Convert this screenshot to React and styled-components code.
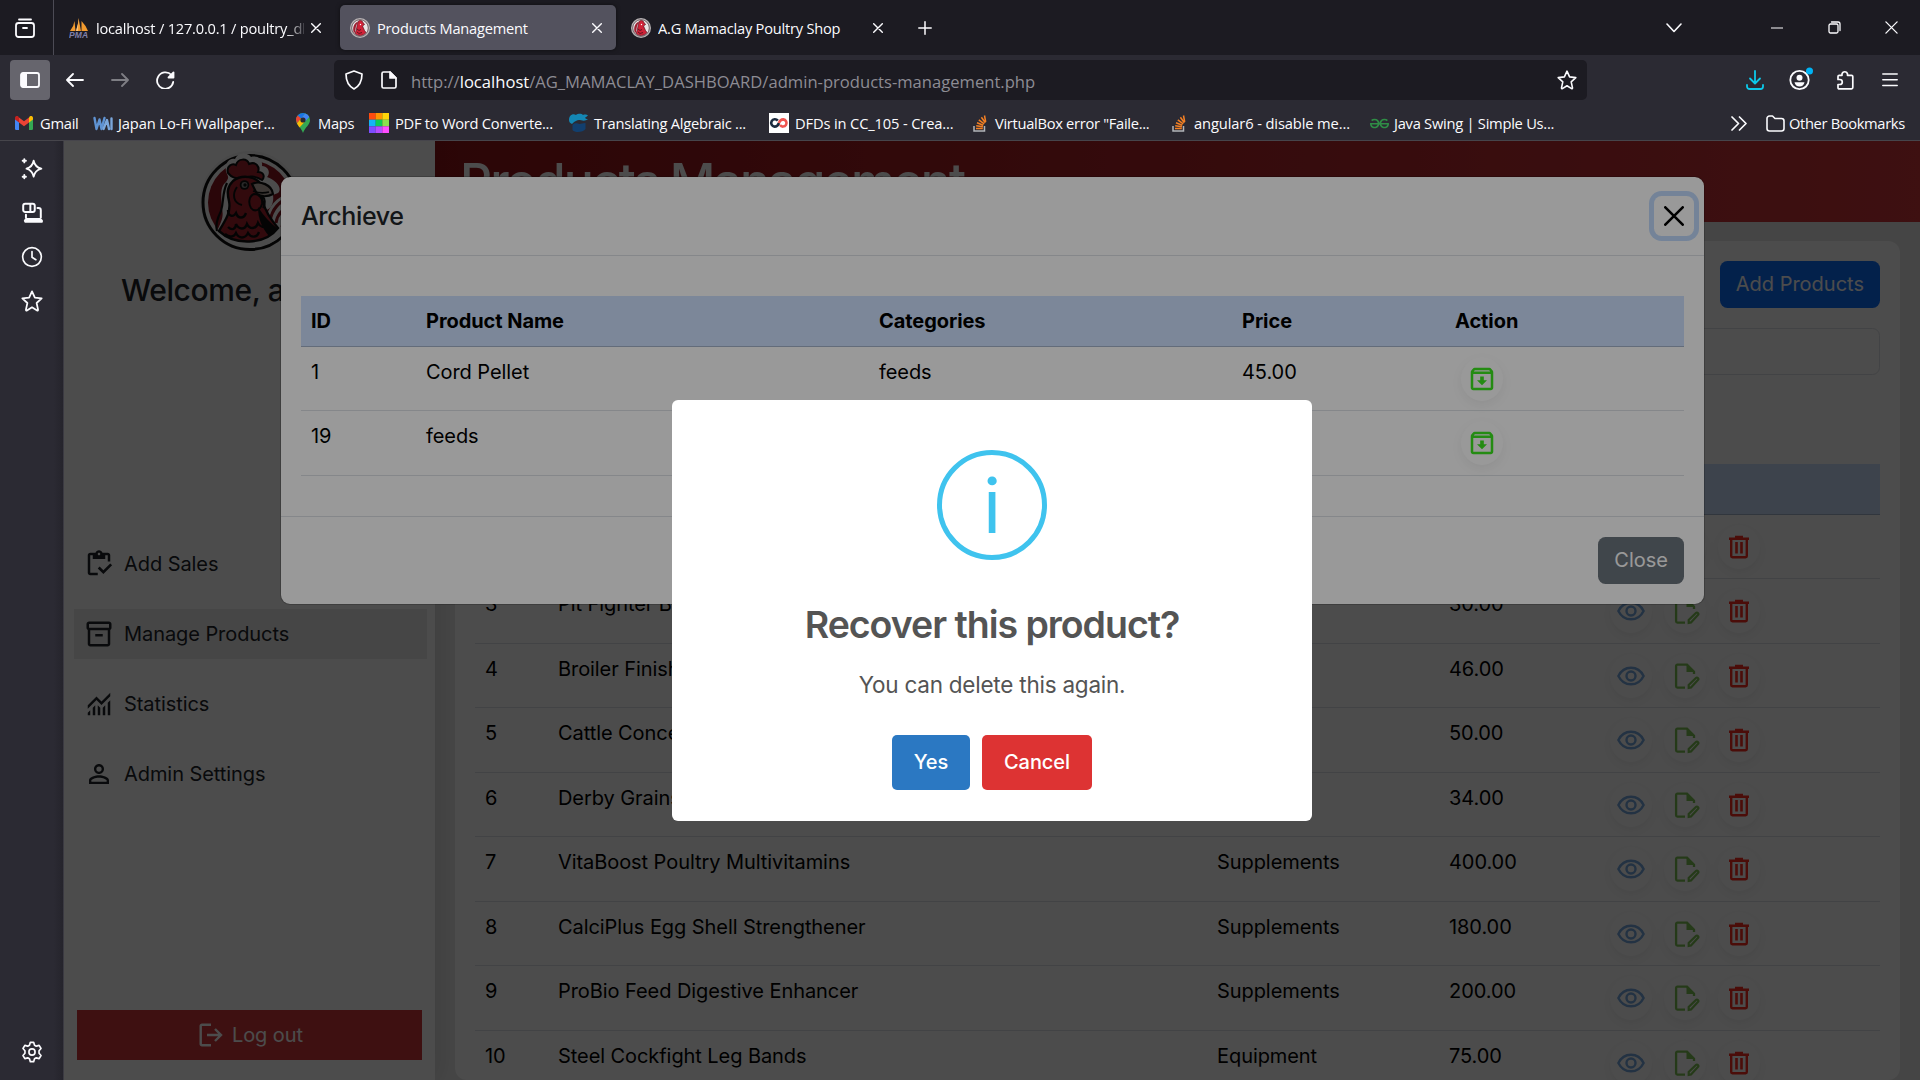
import React from "react";
import styled, { createGlobalStyle, css } from "styled-components";
import { MdOutlineInventory, MdOutlineInventory2, MdPersonOutline, MdOutlineArchive } from "react-icons/md";
import { SiGeeksforgeeks } from "react-icons/si";

const Global = createGlobalStyle`
  *, *::before, *::after { box-sizing: border-box; }
  body { margin: 0; background: #2b2a33; overflow: hidden; }
  svg { display: block; flex: none; }
`;

const ui = '"Open Sans", "Noto Sans", sans-serif';
const inter = 'Inter, "Liberation Sans", sans-serif';

/* ---------- browser window ---------- */

const Window = styled.div`
  width: 1920px;
  height: 1080px;
  display: flex;
  flex-direction: column;
  overflow: hidden;
  background: #2b2a33;
  color: #fbfbfe;
  font-family: ${ui};
`;

const TabStrip = styled.div`
  height: 55px;
  flex: none;
  display: flex;
  align-items: center;
  background: #1c1b22;
`;

const TabsButton = styled.div`
  width: 54px;
  height: 55px;
  padding-left: 15px;
  display: flex;
  align-items: center;
  border-right: 1px solid #4c4b55;
`;

const Tab = styled.div`
  width: 276px;
  height: 45px;
  margin-left: ${(p) => p.$gap || 0}px;
  padding: 0 14.5px 0 10px;
  display: flex;
  align-items: center;
  gap: 7px;
  border-radius: 5px;
  font-size: 14.6px;
  letter-spacing: ${(p) => p.$track || -0.2}px;
  ${(p) =>
    p.$active &&
    css`
      background: #53525e;
      box-shadow: 0 0 4px rgba(0, 0, 0, 0.5);
    `}
`;

const TabLabel = styled.span`
  flex: 1;
  white-space: nowrap;
  overflow: hidden;
  ${(p) => p.$fade && "mask-image: linear-gradient(to right, #000 92%, rgba(0, 0, 0, 0.2) 100%);"}
`;

const Spacer = styled.div`
  flex: 1;
`;

const WindowButtons = styled.div`
  display: flex;
  align-items: center;
  justify-content: space-between;
  width: 238px;
  margin-right: 18px;
`;

const WinSlot = styled.div`
  width: 20px;
  display: flex;
  justify-content: center;
  margin-left: ${(p) => p.$before || 0}px;
  margin-right: ${(p) => p.$after || 0}px;
`;

const Toolbar = styled.div`
  height: 50px;
  flex: none;
  display: flex;
  align-items: center;
  padding: 0 8px 0 10px;
`;

const ToolButton = styled.div`
  width: ${(p) => p.$w || 45}px;
  height: 40px;
  display: flex;
  align-items: center;
  justify-content: center;
  border-radius: 4px;
  background: ${(p) => (p.$on ? "#66656d" : "transparent")};
  opacity: ${(p) => (p.$off ? 0.4 : 1)};
`;

const UrlBar = styled.div`
  width: 1253px;
  height: 40px;
  margin-left: 144px;
  padding: 0 10px;
  display: flex;
  align-items: center;
  gap: 17px;
  border-radius: 5px;
  background: #1c1b22;
`;

const Url = styled.span`
  flex: 1;
  margin-left: -3px;
  padding-top: 3px;
  font-size: 16.6px;
  letter-spacing: 0;
  color: #8d8c94;
  b {
    font-weight: 400;
    color: #fbfbfe;
  }
`;

const Bookmarks = styled.div`
  height: 36px;
  flex: none;
  display: flex;
  align-items: center;
  padding: 1px 0 0 15px;
  border-bottom: 1px solid #46454b;
`;

const Bookmark = styled.div`
  width: ${(p) => p.$w}px;
  display: flex;
  align-items: center;
  gap: ${(p) => p.$gap || 6}px;
  font-size: 14.7px;
  letter-spacing: ${(p) => p.$track || -0.26}px;
  white-space: nowrap;
`;

const Body = styled.div`
  flex: 1;
  min-height: 0;
  display: flex;
`;

const Rail = styled.div`
  width: 64px;
  flex: none;
  padding: 17px 0 17px 21px;
  display: flex;
  flex-direction: column;
  gap: 22px;
  background: linear-gradient(to right, #2b2a33 85%, #25242c);
  border-right: 1px solid #3b3a42;
`;

/* ---------- web page ---------- */

const Viewport = styled.div`
  position: relative;
  flex: 1;
  min-width: 0;
  overflow: hidden;
  font-family: ${inter};
  font-size: 20px;
  line-height: 30px;
  letter-spacing: -0.07px;
  color: #212529;
`;

const Page = styled.div`
  height: 100%;
  display: flex;
  isolation: isolate;
  background: #e9e9e9;
`;

const Sidebar = styled.div`
  width: 371px;
  flex: none;
  display: flex;
  flex-direction: column;
  align-items: center;
  padding: 10px 8px 20px 10px;
  background: #fff;
  box-shadow: 0 0 25px rgba(0, 0, 0, 0.12);
  z-index: 1;
`;

const Brand = styled.div`
  margin-right: 1px;
`;

const Welcome = styled.div`
  align-self: flex-start;
  margin: 21px 0 0 47px;
  font-size: 30px;
  line-height: 36px;
  font-weight: 500;
  letter-spacing: -0.4px;
  white-space: nowrap;
`;

const Nav = styled.div`
  width: 100%;
  margin-top: 231px;
  display: flex;
  flex-direction: column;
  gap: 20px;
`;

const NavItem = styled.div`
  height: 50px;
  padding-left: 10px;
  display: flex;
  align-items: center;
  gap: 10px;
  background: ${(p) => (p.$active ? "#ebebeb" : "transparent")};
`;

const Logout = styled.div`
  width: 345px;
  height: 50px;
  margin-top: auto;
  margin-right: 3px;
  padding-left: 4px;
  display: flex;
  align-items: center;
  justify-content: center;
  gap: 9px;
  background: #d0383b;
  color: #fff;
`;

const Main = styled.div`
  flex: 1;
  min-width: 0;
  display: flex;
  flex-direction: column;
`;

const Header = styled.div`
  height: 81px;
  flex: none;
  padding: 10px 0 0 25px;
  background: linear-gradient(to right, #921418, #d0363b);
  color: #fff;
  font-size: 50px;
  line-height: 60px;
  font-weight: 500;
  letter-spacing: -1.95px;
  white-space: nowrap;
`;

const Card = styled.div`
  flex: 1;
  min-height: 0;
  margin: 19px 20px 0;
  padding: 20px;
  display: flex;
  flex-direction: column;
  overflow: hidden;
  border-radius: 12px;
  background: #fff;
`;

const Button = styled.div`
  height: 47px;
  flex: none;
  padding: 0 16px 1px;
  display: flex;
  align-items: center;
  align-self: flex-end;
  border-radius: 7.5px;
  background: ${(p) => p.$bg};
  color: #fff;
  letter-spacing: 0;
`;

const Search = styled.div`
  height: 47px;
  flex: none;
  margin: 20px 0 89px;
  border: 1px solid #dee2e6;
  border-radius: 7.5px;
`;

const Row = styled.div`
  display: grid;
  grid-template-columns: ${(p) => p.$cols};
  height: ${(p) => (p.$head ? 51 : 64.45)}px;
  flex: none;
  padding: 10px 0 0;
  border-bottom: 1px solid ${(p) => (p.$head ? "#a6b5cc" : "#dee2e6")};
  background: ${(p) => (p.$head ? "#cfe2ff" : "transparent")};
  color: #000;
  font-weight: ${(p) => (p.$head ? 700 : 400)};
`;

const Cell = styled.div`
  padding-left: 10px;
  white-space: nowrap;
`;

const Actions = styled(Cell)`
  display: flex;
  gap: 12px;
  padding-left: ${(p) => p.$inset || 10}px;
`;

const Round = styled.div`
  width: 42px;
  height: 44px;
  display: flex;
  align-items: center;
  justify-content: center;
  border-radius: 50%;
  background: #fff;
  box-shadow: 0 4px 12px rgba(0, 0, 0, 0.06);
  color: ${(p) => p.$color};
`;

const Shade = styled.div`
  position: absolute;
  inset: 0;
  background: rgba(0, 0, 0, ${(p) => p.$a});
`;

/* ---------- archive modal ---------- */

const Modal = styled.div`
  position: absolute;
  left: 216px;
  top: 35px;
  width: 1425px;
  height: 429px;
  display: flex;
  flex-direction: column;
  border-radius: 10px;
  border: 1px solid rgba(0, 0, 0, 0.18);
  background: #fff;
  background-clip: padding-box;
`;

const ModalHead = styled.div`
  height: 79px;
  flex: none;
  padding: 0 10px 0 20px;
  display: flex;
  align-items: center;
  justify-content: space-between;
  border-bottom: 1px solid #dee2e6;
  font-size: 25px;
  font-weight: 500;
  letter-spacing: -0.35px;
`;

const CloseX = styled.div`
  width: 40px;
  height: 40px;
  display: flex;
  align-items: center;
  justify-content: center;
  border-radius: 7.5px;
  box-shadow: 0 0 0 5px rgba(13, 110, 253, 0.25);
`;

const ModalBody = styled.div`
  flex: 1;
  padding: 40px 20px 0;
`;

const ModalFoot = styled.div`
  height: 88px;
  padding: 20px 20px 0;
  display: flex;
  flex-direction: column;
  border-top: 1px solid #dee2e6;
`;

/* ---------- confirm dialog ---------- */

const Dialog = styled.div`
  position: absolute;
  left: 608px;
  top: 259px;
  width: 640px;
  height: 421px;
  display: flex;
  flex-direction: column;
  align-items: center;
  border-radius: 6px;
  background: #fff;
  color: #545454;
`;

const InfoCircle = styled.div`
  width: 110px;
  height: 110px;
  margin-top: 50px;
  display: flex;
  align-items: center;
  justify-content: center;
  border: 5px solid #3fc3ee;
  border-radius: 50%;
  color: #3fc3ee;
  font-size: 75px;
  line-height: 75px;
`;

const DialogTitle = styled.div`
  margin-top: 37px;
  font-size: 37.5px;
  line-height: 56px;
  font-weight: 600;
  letter-spacing: -1.03px;
`;

const DialogText = styled.div`
  margin-top: 15px;
  font-size: 22.5px;
  line-height: 34px;
  letter-spacing: -0.23px;
`;

const DialogActions = styled.div`
  margin-top: 33px;
  display: flex;
  gap: 12px;
`;

const DialogButton = styled.div`
  width: ${(p) => p.$w}px;
  height: 55px;
  padding-bottom: 2px;
  display: flex;
  align-items: center;
  justify-content: center;
  border-radius: 5px;
  background: ${(p) => p.$bg};
  color: #fff;
  font-weight: 500;
`;

/* ---------- icons ---------- */

const Line = ({ w = 20, h = w, vb = `0 0 ${w} ${h}`, sw = 1.6, color = "#fbfbfe", children }) => (
  <svg width={w} height={h} viewBox={vb} fill="none" stroke={color} strokeWidth={sw} strokeLinecap="round" strokeLinejoin="round">
    {children}
  </svg>
);

const Cross = ({ s = 10, sw = 1.4 }) => (
  <Line w={s} vb="0 0 10 10" sw={sw}><path d="M.7.7l8.6 8.6M9.3.7L.7 9.3" /></Line>
);

const Star = ({ s = 20 }) => (
  <Line w={s} sw={1.6} vb="0 0 20 20">
    <path d="M10 1.200l2.600 5.700 6.200.7-4.600 4.200 1.300 6.100c.1.600-.4 1-.9.700L10 15.700l-4.600 2.900c-.5.300-1-.1-.9-.7l1.300-6.100L1.200 7.600l6.200-.7z" />
  </Line>
);

const RoosterMini = () => (
  <svg width="20" height="20" viewBox="0 0 20 20">
    <circle cx="10" cy="10" r="10" fill="#b9b4b6" />
    <circle cx="10" cy="10" r="8.300" fill="#e9e4e5" stroke="#57484d" strokeWidth=".8" />
    <path d="M4 15C2 10 4 5 8 3.500L6 8l-1 6z" fill="#9d1f31" />
    <path d="M8 4c1-2 4-2 5 .5l1.500 2-2 1.500 2 4.500 1.500 2c-3 3.500-8 4-11 .8C7 12 6.500 8 8 4z" fill="#cf2238" stroke="#5b1320" strokeWidth=".7" />
    <path d="M7 11l2 1.500 2-1M7 14l2 1.500 3-1" stroke="#4a1019" strokeWidth=".8" fill="none" />
    <circle cx="10.500" cy="6.500" r=".7" fill="#fff" />
  </svg>
);

const Pma = () => (
  <svg width="20" height="20" viewBox="0 0 20 20">
    <path d="M1 13Q5 8 5.500 3L6.500 13zM7 13Q9.500 6 9.500 0l2.500 13zM12.500 13V3q4 4 6.500 10z" fill="#f29a2e" />
    <path d="M7 13Q9.500 6 9.500 0l-.5 13z" fill="#f7c27c" />
    <text x="0" y="19.500" fontFamily="Liberation Sans" fontStyle="italic" fontWeight="700" fontSize="8.500" fill="#8080aa" textLength="19">PMA</text>
  </svg>
);

const Gmail = () => (
  <svg width="18" height="14" viewBox="0 0 18 14">
    <path d="M0 2v10.800A1.200 1.200 0 001.200 14H4V5z" fill="#4285f4" />
    <path d="M18 2v10.800a1.200 1.200 0 01-1.200 1.200H14V5z" fill="#34a853" />
    <path d="M14 1.500V6.500L18 3.500V2c0-1.800-2-2.700-3.300-1.600z" fill="#fbbc04" />
    <path d="M4 6.500v-5l5 3.800 5-3.800v5l-5 3.800z" fill="#ea4335" />
    <path d="M0 2v1.500l4 3v-5L3.300.4C2 -.7 0 .2 0 2z" fill="#c5221f" />
  </svg>
);

const WaLogo = () => (
  <svg width="20" height="15" viewBox="0 0 20 15" fill="none" stroke="#5f93d3" strokeWidth="2.400" strokeLinejoin="round" strokeLinecap="round">
    <path d="M1.500 2l2 11 3-9.500 2 9.500 3-11" />
    <path d="M10.500 13l3.500-9 2 9M18.500 2.500V13" stroke="#7ba7dc" />
  </svg>
);

const MapsPin = () => (
  <svg width="14" height="20" viewBox="0 0 14 20">
    <path d="M7 0a7 7 0 00-7 7c0 5 5 7 7 13 2-6 7-8 7-13a7 7 0 00-7-7z" fill="#34a853" />
    <path d="M7 0a7 7 0 00-5.400 2.500L5 5.500 9.200.400A7 7 0 007 0z" fill="#1a73e8" />
    <path d="M1.600 2.500A7 7 0 000 7l1 3.500L5 5.500z" fill="#ea4335" />
    <path d="M9.200.4A7 7 0 0113.300 4L9 8.500 5 5.500z" fill="#4285f4" />
    <path d="M1 10.500L5 5.500 9 8.500 3.500 14.500z" fill="#fbbc04" />
    <circle cx="7" cy="7" r="2.600" fill="#2b2a33" />
  </svg>
);

const pdfTiles = ["#ff4b0f", "#ff9500", "#ffd60a", "#14b4f5", "#0bcb57", "#8be04e", "#7d4dff", "#b44dff", "#ff4dff"];
const PdfGrid = () => (
  <svg width="20" height="20" viewBox="0 0 21 21">
    {pdfTiles.map((c, i) => (
      <rect key={c} x={(i % 3) * 7} y={Math.floor(i / 3) * 7} width="7.100" height="7.100" fill={c} />
    ))}
  </svg>
);

const Translate = () => (
  <svg width="19" height="20" viewBox="0 0 19 20">
    <path d="M0 7C0 2 4 0 7 2c3-2 6-1 7 0 2-1 4 0 5 0-1 2-3 2-3 3 1 1 2 1 3 1-3 3-7 1-9 1S6 8 3 11C1 10 0 9 0 7z" fill="#1487b4" />
    <path d="M3.500 12c3-3 5-1 7-1s3-1 6-1v6c-2 3-10 4.500-13 1z" fill="#123f6e" />
  </svg>
);

const Course = () => (
  <svg width="20" height="20" viewBox="0 0 20 20" fill="none" strokeWidth="2.600">
    <rect width="20" height="20" fill="#fff" stroke="none" />
    <path d="M8.800 7.600A3.700 3.700 0 105.500 13.600C8.500 13.600 9.500 11.500 10 10" stroke="#1d2c40" />
    <path d="M10 10C10.600 8 11.800 6.400 14.300 6.400a3.600 3.600 0 11-3.300 5.700" stroke="#f0544f" />
  </svg>
);

const Stack = () => (
  <svg width="14" height="17" viewBox="0 0 14 17" fill="none" strokeWidth="1.500">
    <path d="M1 11v5h10.500v-5" stroke="#b2b5b9" />
    <path d="M3 13.500h6.800M3.200 10.800l6.700.9M4 7.800l6.300 2.400M5.800 4.800l5.400 4M8.400 2.300l3.900 5.400M11.500.5l1.200 6.500" stroke="#f48024" />
  </svg>
);

const RoosterLogo = () => (
  <svg width="100" height="100" viewBox="0 0 100 100">
    <circle cx="50" cy="50" r="50" fill="#f4f4f4" />
    <circle cx="50" cy="51.500" r="47" fill="#fff" stroke="#111" strokeWidth="3" />
    <circle cx="50" cy="51.500" r="42" fill="#8c1420" />
    <path d="M90 42C76 46 68 56 66 68l12 18c8-6 14-18 14-32z" fill="#fff" />
    <path d="M90 46C80 50 72 58 70 70M91 54c-9 4-14 10-15 18M91 64c-5 2-8 6-9 12" stroke="#8c1420" strokeWidth="3" fill="none" />
    <path d="M27 23c-4-9 2-17 8-15 3-7 13-7 16-2 7-2 12 3 11 9 8 1 8 8 5 11 9 3 16 11 11 16l-5 2c1 6-1 14-7 15 3 10 10 18 17 24-16 18-50 16-66-3 4-9 7-14 5-22C21 44 20 36 26 31c2-3 3-4 1-8z" fill="#fff" />
    <path d="M27 32C22 42 24 50 21 60 18 66 15 74 17 80" stroke="#111" strokeWidth="2.200" fill="none" />
    <path d="M28 22c-2-7 4-10 8-8 2-7 11-7 13-1 7-3 11 3 9 8 6 0 7 5 4 8-6-4-14-5-20-1-5-1-9 0-14-6z" fill="#a5242f" stroke="#111" strokeWidth="2" />
    <path d="M33 30c9-7 24-5 29 5 2 6-1 11 1 16 3 12 10 20 15 26-13 17-43 18-59 3 8-13 12-20 10-30-2-8-2-14 4-20z" fill="#a8232e" stroke="#111" strokeWidth="2.400" />
    <path d="M52 33c8-4 20 1 21 10-5 3-12 3-16 0z" fill="#c9b8ae" stroke="#111" strokeWidth="2.200" />
    <path d="M53 40c5 2 12 2 16 1" stroke="#111" strokeWidth="1.600" fill="none" />
    <path d="M54 43c5 0 9 4 8 10-2 7-8 8-11 4-3-5-2-12 3-14z" fill="#a8232e" stroke="#111" strokeWidth="2" />
    <path d="M62 45c3 2 4 8 1 12" stroke="#111" strokeWidth="2" fill="none" />
    <path d="M37 36c-5 7-4 16 5 18" stroke="#111" strokeWidth="2" fill="none" />
    <circle cx="44.500" cy="34" r="4.800" fill="#111" />
    <circle cx="44.500" cy="34" r="3" fill="#8a8a8a" />
    <circle cx="45" cy="34" r="1.700" fill="#111" />
    <path d="M28 59c0 6 5 8 8 3 2 6 8 6 10 0M28 76c4 4 8 2 8-3 3 6 9 6 11 0 3 6 9 5 11-1 2 4 6 5 8 2M25 83c5 4 9 3 11-1 3 6 9 6 12 0 3 5 9 5 11-1" stroke="#111" strokeWidth="2.400" fill="none" />
    <path d="M58 56c6 9 12 16 20 22l-9 7C62 77 58 68 58 56z" fill="#111" />
  </svg>
);

const Monitoring = () => (
  <svg width="30" height="30" viewBox="0 -960 960 960" fill="currentColor">
    <path d="M120-120v-80l80-80v160h-80Zm160 0v-240l80-80v320h-80Zm160 0v-320l80 81v239h-80Zm160 0v-239l80-80v319h-80Zm160 0v-400l80-80v480h-80ZM120-327v-113l280-280 160 160 280-280v113L560-447 400-607 120-327Z" />
  </svg>
);

const LogoutIcon = () => (
  <svg width="24" height="24" viewBox="0 0 24 24" fill="none" stroke="currentColor" strokeWidth="2.400">
    <path d="M12 1.700H3a1.300 1.300 0 00-1.300 1.300v18A1.300 1.300 0 003 22.300h9M8 12h14M16 6l6 6-6 6" />
  </svg>
);

const Eye = () => (
  <svg width="30" height="30" viewBox="0 0 30 30" fill="none" stroke="currentColor" strokeWidth="2.400">
    <path d="M2.400 15C5 9.700 9.600 6.700 15 6.700S25 9.700 27.600 15C25 20.300 20.400 23.300 15 23.300S5 20.300 2.400 15z" />
    <circle cx="15" cy="15" r="4.500" />
  </svg>
);

const FilePen = () => (
  <svg width="30" height="30" viewBox="0 0 30 30" fill="none" stroke="currentColor" strokeWidth="2.300">
    <path d="M15 26.600H7.400A1.300 1.300 0 016.100 25.300V5a1.300 1.300 0 011.300-1.300H17l7 7V13" />
    <path d="M16.500 3.500V11H25z" fill="currentColor" stroke="none" />
    <path d="M18.700 26.900v-3l7.200-6.900a1.300 1.300 0 012 2L21 26.400z" strokeWidth="2.200" />
  </svg>
);

const Trash = () => (
  <svg width="30" height="30" viewBox="0 0 30 30" fill="none" stroke="currentColor" strokeWidth="2.400">
    <path d="M5 6.700h20M11 4.900h8M7.200 6.700V24a1.200 1.200 0 001.200 1.200h13.200A1.200 1.200 0 0022.800 24V6.700" />
    <path d="M12.500 10v11.500M17.500 10v11.500" strokeWidth="2.600" />
  </svg>
);

/* ---------- data ---------- */

const mainCols = "73px 659px 232px 161px 1fr";
const products = [
  [2, "Corn Grits", "feeds", "30.00"],
  [3, "Pit Fighter Booster", "feeds", "30.00"],
  [4, "Broiler Finisher", "feeds", "46.00"],
  [5, "Cattle Concentrate", "feeds", "50.00"],
  [6, "Derby Grains", "feeds", "34.00"],
  [7, "VitaBoost Poultry Multivitamins", "Supplements", "400.00"],
  [8, "CalciPlus Egg Shell Strengthener", "Supplements", "180.00"],
  [9, "ProBio Feed Digestive Enhancer", "Supplements", "200.00"],
  [10, "Steel Cockfight Leg Bands", "Equipment", "75.00"],
];

const modalCols = "115px 453px 363px 213px 1fr";
const archived = [
  [1, "Cord Pellet", "feeds", "45.00"],
  [19, "feeds", "feeds", "45.00"],
];

const navItems = [
  ["Add Sales", <MdOutlineInventory size={30} />],
  ["Manage Products", <MdOutlineInventory2 size={30} />],
  ["Statistics", <Monitoring />],
  ["Admin Settings", <MdPersonOutline size={30} />],
];

const bookmarks = [
  ["Gmail", <Gmail />, 78, 7],
  ["Japan Lo-Fi Wallpaper...", <WaLogo />, 203, 5, -0.12],
  ["Maps", <MapsPin />, 73, 8],
  ["PDF to Word Converte...", <PdfGrid />, 200, 6],
  ["Translating Algebraic ...", <Translate />, 200, 6],
  ["DFDs in CC_105 - Crea...", <Course />, 204, 6, -0.15],
  ['VirtualBox error "Faile...', <Stack />, 199, 8, -0.3],
  ["angular6 - disable me...", <Stack />, 198, 8, -0.12],
  ["Java Swing | Simple Us...", <SiGeeksforgeeks size={19} color="#2f8d46" />, 361, 5],
];

const headings = ["ID", "Product Name", "Categories", "Price", "Action"];

const HeadRow = ({ cols }) => (
  <Row $head $cols={cols}>
    {headings.map((h) => <Cell key={h}>{h}</Cell>)}
  </Row>
);

export default function App() {
  return (
    <Window>
      <Global />
      <TabStrip>
        <TabsButton>
          <Line w={20} sw={1.8}>
            <path d="M4 1.500h12" /><rect x="1" y="5" width="18" height="14" rx="2.500" /><path d="M8 10h4" />
          </Line>
        </TabsButton>
        <Tab $gap={5}>
          <Pma />
          <TabLabel $fade>localhost / 127.0.0.1 / poultry_db</TabLabel>
          <Cross />
        </Tab>
        <Tab $active $gap={5}>
          <RoosterMini />
          <TabLabel>Products Management</TabLabel>
          <Cross />
        </Tab>
        <Tab $gap={5}>
          <RoosterMini />
          <TabLabel>A.G Mamaclay Poultry Shop</TabLabel>
          <Cross />
        </Tab>
        <WinSlot $before={18}>
          <Line w={14} sw={1.5}><path d="M7 .8v12.400M.8 7h12.400" /></Line>
        </WinSlot>
        <Spacer />
        <WindowButtons>
          <WinSlot $after={46}><Line w={16} h={10} sw={1.6}><path d="M1 1l7 7.500L15 1" /></Line></WinSlot>
          <WinSlot><Line w={12} h={2} sw={1.2}><path d="M0 1h12" /></Line></WinSlot>
          <WinSlot>
            <Line w={13} h={13} sw={1.3}>
              <rect x="1" y="3" width="9" height="9" rx="1.500" /><path d="M3.500 1h6.500a2 2 0 012 2v6.500" />
            </Line>
          </WinSlot>
          <WinSlot><Cross s={13} sw={1} /></WinSlot>
        </WindowButtons>
      </TabStrip>

      <Toolbar>
        <ToolButton $on $w={40}>
          <svg width="20" height="16" viewBox="0 0 20 16">
            <rect x="1" y="1" width="18" height="14" rx="2" fill="none" stroke="#fbfbfe" strokeWidth="1.800" />
            <path d="M1 1h6v14H1z" fill="#fbfbfe" />
          </svg>
        </ToolButton>
        <ToolButton $w={50}><Line w={18} h={14} sw={1.8}><path d="M17 7H1.200M7 1L1 7l6 6" /></Line></ToolButton>
        <ToolButton $w={40} $off><Line w={18} h={14} sw={1.800}><path d="M1 7h15.800M11 1l6 6-6 6" /></Line></ToolButton>
        <ToolButton $w={50}>
          <Line w={19} h={18} sw={1.8}><path d="M17.200 11A8.100 8.100 0 112 6a8.200 8.200 0 0113.500-2l1.500 1.500" /><path d="M17.500 1.500v5h-5z" fill="#fbfbfe" /></Line>
        </ToolButton>
        <UrlBar>
          <Line w={20} h={20} sw={1.7}><path d="M10 1l8 3c0 7-2.500 12-8 15C4.500 16 2 11 2 4z" /></Line>
          <Line w={16} h={18} sw={1.7}><path d="M3 1h6l6 6v8.500A1.500 1.500 0 0113.500 17h-11A1.500 1.500 0 011 15.500v-13A1.500 1.500 0 012.500 1z" /><path d="M9 1v6h6z" fill="#fbfbfe" /></Line>
          <Url>http://<b>localhost</b>/AG_MAMACLAY_DASHBOARD/admin-products-management.php</Url>
          <Star />
        </UrlBar>
        <Spacer />
        <ToolButton>
          <Line w={18} h={20} sw={1.8} color="#0cc9ea"><path d="M9 1v12M4 8.500l5 5 5-5M1 15v1.500A2.500 2.500 0 003.500 19h11a2.500 2.500 0 002.500-2.500V15" /></Line>
        </ToolButton>
        <ToolButton>
          <svg width="26" height="26" viewBox="0 0 26 26">
            <circle cx="12.500" cy="13" r="9.200" fill="none" stroke="#fbfbfe" strokeWidth="1.800" />
            <circle cx="12.500" cy="10.800" r="3" fill="#fbfbfe" />
            <path d="M7.500 15.200h10c-.5 2.800-2.500 4.200-5 4.200s-4.500-1.400-5-4.200z" fill="#fbfbfe" />
            <circle cx="22.500" cy="4" r="3.500" fill="#00b3f4" />
          </svg>
        </ToolButton>
        <ToolButton>
          <Line w={18} h={20} sw={1.7}>
            <path d="M2 8.500V6.500A1.200 1.200 0 013.200 5.300H6V4a2.800 2.800 0 015.500 0v1.300h4A1.300 1.300 0 0116.800 6.600v11a1.300 1.300 0 01-1.300 1.300H3.200A1.200 1.200 0 012 17.700V14.500h1.800a2 2 0 000-5H2z" />
          </Line>
        </ToolButton>
        <ToolButton><Line w={16} h={14} sw={1.5}><path d="M.8 1h14.400M.8 6.800h14.400M.8 12.600h14.400" /></Line></ToolButton>
      </Toolbar>

      <Bookmarks>
        {bookmarks.map(([label, icon, w, gap, track]) => (
          <Bookmark key={label} $w={w} $gap={gap} $track={track}>{icon}{label}</Bookmark>
        ))}
        <Bookmark $w={35}><Line w={16} h={15} sw={1.7}><path d="M1 1l6.500 6.500L1 14M8.500 1L15 7.500 8.500 14" /></Line></Bookmark>
        <Bookmark $w={140} $gap={4} $track={-0.35}>
          <Line w={19} h={17} sw={1.6}><path d="M1 13.500V3.500A2.500 2.500 0 013.500 1h3L9 3.500h6.500A2.500 2.500 0 0118 6v7.500a2.500 2.500 0 01-2.500 2.500h-12A2.500 2.500 0 011 13.500z" /></Line>
          Other Bookmarks
        </Bookmark>
      </Bookmarks>

      <Body>
        <Rail>
          <Line w={22} sw={1.7} vb="0 0 20 20"><path d="M11.500 2.500c.8 4.200 2.500 6 7 7.200-4.500 1.200-6.200 3-7 7.300-.8-4.300-2.500-6.100-6.500-7.300 4-1.200 5.700-3 6.500-7.200zM3 1v3M1.500 2.500h3M3 15.500v3M1.500 17h3" /></Line>
          <Line w={22} sw={1.8} vb="0 0 20 20"><rect x="2" y="1.500" width="10.500" height="7.500" rx="1.800" /><path d="M8.500 2v7M4.500 11.500V14M15 5.500h1a2 2 0 012 2V14" /><path d="M3.500 17l1-1.500h13l1.500 1.500v1h-15z" fill="#fbfbfe" /></Line>
          <Line w={22} sw={1.5} vb="0 0 20 20"><circle cx="10" cy="10" r="8.500" /><path d="M10 5v5.200l3.500 2.300" /></Line>
          <Star s={22} />
          <Spacer />
          <Line w={22} sw={1.5} vb="0 0 20 20">
            <circle cx="10" cy="10" r="2.800" />
            <path d="M8.500 1.200h3l.8 2.600 1.600.9 2.600-.7 1.700 2.800-1.800 2v2.400l1.800 2-1.700 2.800-2.600-.7-1.600.9-.8 2.600h-3l-.8-2.600-1.600-.9-2.600.7-1.700-2.800 1.800-2V8.800l-1.800-2L3.500 4l2.600.7 1.600-.9z" />
          </Line>
        </Rail>

        <Viewport>
          <Page>
            <Sidebar>
              <Brand><RoosterLogo /></Brand>
              <Welcome>Welcome, admin!</Welcome>
              <Nav>
                {navItems.map(([label, icon], i) => (
                  <NavItem key={label} $active={i === 1}>{icon}{label}</NavItem>
                ))}
              </Nav>
              <Logout><LogoutIcon />Log out</Logout>
            </Sidebar>
            <Main>
              <Header>Products Management</Header>
              <Card>
                <Button $bg="#0d6efd">Add Products</Button>
                <Search />
                <HeadRow cols={mainCols} />
                {products.map(([id, ...rest]) => (
                  <Row key={id} $cols={mainCols}>
                    <Cell>{id}</Cell>
                    {rest.map((v, i) => <Cell key={i}>{v}</Cell>)}
                    <Actions>
                      <Round $color="#76a9e0"><Eye /></Round>
                      <Round $color="#7fc455"><FilePen /></Round>
                      <Round $color="#fb2c1e"><Trash /></Round>
                    </Actions>
                  </Row>
                ))}
              </Card>
            </Main>
          </Page>
          <Shade $a={0.5} />
          <Modal>
            <ModalHead>
              Archieve
              <CloseX>
                <Line w={20} sw={2.6} color="#000"><path d="M1.300 1.300l17.400 17.400M18.700 1.300L1.300 18.700" /></Line>
              </CloseX>
            </ModalHead>
            <ModalBody>
              <HeadRow cols={modalCols} />
              {archived.map(([id, ...rest]) => (
                <Row key={id} $cols={modalCols}>
                  <Cell>{id}</Cell>
                  {rest.map((v, i) => <Cell key={i}>{v}</Cell>)}
                  <Actions $inset={16}>
                    <Round $color="#3ce81f"><MdOutlineArchive size={30} /></Round>
                  </Actions>
                </Row>
              ))}
            </ModalBody>
            <ModalFoot><Button $bg="#6c757d">Close</Button></ModalFoot>
          </Modal>
          <Shade $a={0.4} />
          <Dialog>
            <InfoCircle>i</InfoCircle>
            <DialogTitle>Recover this product?</DialogTitle>
            <DialogText>You can delete this again.</DialogText>
            <DialogActions>
              <DialogButton $w={78} $bg="#2b78c2">Yes</DialogButton>
              <DialogButton $w={110} $bg="#dd3333">Cancel</DialogButton>
            </DialogActions>
          </Dialog>
        </Viewport>
      </Body>
    </Window>
  );
}
